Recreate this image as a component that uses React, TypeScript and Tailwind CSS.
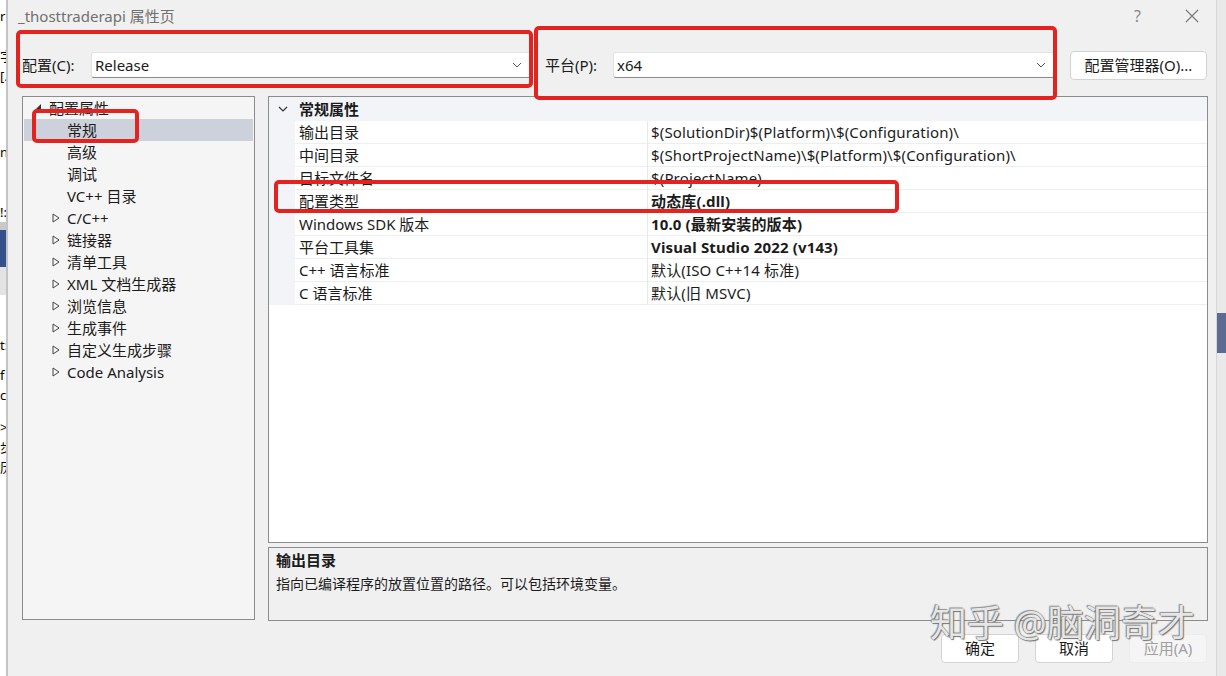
import React from 'react';

const ROWS: [string, string, boolean][] = [
  ['输出目录', '$(SolutionDir)$(Platform)\\$(Configuration)\\', false],
  ['中间目录', '$(ShortProjectName)\\$(Platform)\\$(Configuration)\\', false],
  ['目标文件名', '$(ProjectName)', false],
  ['配置类型', '动态库(.dll)', true],
  ['Windows SDK 版本', '10.0 (最新安装的版本)', true],
  ['平台工具集', 'Visual Studio 2022 (v143)', true],
  ['C++ 语言标准', '默认(ISO C++14 标准)', false],
  ['C 语言标准', '默认(旧 MSVC)', false],
];

const LEAVES = ['常规', '高级', '调试', 'VC++ 目录'];
const GROUPS = ['C/C++', '链接器', '清单工具', 'XML 文档生成器', '浏览信息', '生成事件', '自定义生成步骤', 'Code Analysis'];

function Chevron() {
  return (
    <svg width="10" height="6" viewBox="0 0 10 6" className="shrink-0">
      <polyline points="1,1 5,5 9,1" fill="none" stroke="#555" strokeWidth="1" />
    </svg>
  );
}

function Combo({ value, width }: { value: string; width: string }) {
  return (
    <div className={`${width} h-[26px] bg-white border border-[#e2e2e2] border-b-[#8a8a8a] rounded-[3px] flex items-center pl-[3px] pr-[8px]`}>
      <span className="flex-1">{value}</span>
      <Chevron />
    </div>
  );
}

function Collapsed() {
  return (
    <svg width="8" height="10" viewBox="0 0 8 10" className="shrink-0">
      <polygon points="1,1 7,5 1,9" fill="none" stroke="#444" strokeWidth="1" />
    </svg>
  );
}

function RedBox({ cls }: { cls: string }) {
  return <div className={`absolute border-[4px] border-[#e3231f] rounded-[5px] pointer-events-none ${cls}`} />;
}

export default function App() {
  return (
    <div className="relative w-[1226px] h-[676px] flex overflow-hidden bg-[#f0f0f0] text-[15px] text-[#1b1b1b] font-['Noto_Sans','Noto_Sans_CJK_SC',sans-serif]">
      {/* background window on the left */}
      <div className="w-[8px] shrink-0 flex flex-col bg-white border-r-2 border-[#c4c4c4] overflow-hidden text-[13px] leading-[20px] text-black">
        <div className="h-[6px]" />
        <div>r:</div>
        <div className="h-[20px]" />
        <div>字</div>
        <div>[.]</div>
        <div className="h-[56px]" />
        <div>n:</div>
        <div className="h-[40px]" />
        <div>!:</div>
        <div className="h-[8px] bg-[#c9c9c9]" />
        <div className="h-[37px] bg-[#34518c]" />
        <div className="h-[28px] bg-[#e3e3e3]" />
        <div className="h-[40px]" />
        <div>t:</div>
        <div className="h-[10px]" />
        <div>f</div>
        <div>c</div>
        <div className="h-[12px]" />
        <div>&gt;</div>
        <div>步</div>
        <div>历</div>
      </div>

      {/* dialog */}
      <div className="w-[1209px] shrink-0 flex flex-col bg-[#f0f0f0] border-r border-[#d6d6d6]">
        {/* title bar */}
        <div className="h-[32px] flex items-center pl-[10px] pr-[17px] text-[#707070]">
          <span className="flex-1">_thosttraderapi 属性页</span>
          <span className="text-[16px] text-[#8a8a8a] mr-[44px]">?</span>
          <svg width="14" height="14" viewBox="0 0 14 14">
            <path d="M1 1 L13 13 M13 1 L1 13" stroke="#777" strokeWidth="1.1" />
          </svg>
        </div>

        {/* config row */}
        <div className="mt-[18px] h-[30px] flex items-center pl-[14px] pr-[9px]">
          <span className="w-[69px]">配置(C):</span>
          <Combo value="Release" width="w-[440px]" />
          <span className="ml-[14px] w-[68px]">平台(P):</span>
          <Combo value="x64" width="w-[442px]" />
          <div className="ml-[15px] w-[137px] h-[29px] bg-white border border-[#d3d3d3] rounded-[4px] flex items-center justify-center">
            配置管理器(O)...
          </div>
        </div>

        {/* panels */}
        <div className="mt-[16px] flex pl-[14px] pr-[8px] gap-[13px]">
          {/* tree */}
          <div className="w-[233px] h-[524px] bg-[#f5f5f5] border border-[#8c8c8c] px-[1px]">
            <div className="h-[22px] flex items-center">
              <svg width="8" height="8" viewBox="0 0 8 8" className="ml-[10px] mr-[7px]">
                <polygon points="7,0 7,7 0,7" fill="#333" />
              </svg>
              <span>配置属性</span>
            </div>
            {LEAVES.map((l, i) => (
              <div key={l} className={`h-[22px] flex items-center pl-[43px] ${i === 0 ? 'bg-[#cdd1db]' : ''}`}>
                {l}
              </div>
            ))}
            {GROUPS.map(g => (
              <div key={g} className="h-[22px] flex items-center pl-[28px] gap-[7px]">
                <Collapsed />
                <span>{g}</span>
              </div>
            ))}
          </div>

          {/* property grid + description */}
          <div className="flex-1 flex flex-col gap-[4px]">
            <div className="h-[447px] bg-white border border-[#8c8c8c] flex flex-col">
              <div className="h-[24px] flex items-center bg-[#f2f4f8] font-bold">
                <svg width="10" height="6" viewBox="0 0 10 6" className="ml-[9px] mr-[11px]">
                  <polyline points="1,1 5,5 9,1" fill="none" stroke="#333" strokeWidth="1.2" />
                </svg>
                <span>常规属性</span>
              </div>
              {ROWS.map(([name, val, bold]) => (
                <div key={name} className="h-[23px] flex">
                  <div className="w-[26px] bg-[#f2f4f8]" />
                  <div className="w-[353px] flex items-center pl-[4px] border-b border-[#eceef2] border-r border-r-[#e6e8ec]">
                    {name}
                  </div>
                  <div className={`flex-1 flex items-center pl-[3px] tracking-[0.15px] border-b border-[#eceef2] ${bold ? 'font-bold' : ''}`}>
                    {val}
                  </div>
                </div>
              ))}
            </div>
            <div className="h-[74px] bg-[#f0f0f0] border border-[#8c8c8c] px-[7px] pt-[1px] leading-[23px]">
              <div className="font-bold">输出目录</div>
              <div className="text-[14px]">指向已编译程序的放置位置的路径。可以包括环境变量。</div>
            </div>
          </div>
        </div>

        {/* buttons */}
        <div className="mt-[13px] flex justify-end gap-[16px] pr-[9px]">
          <div className="w-[78px] h-[29px] bg-white border border-[#d3d3d3] rounded-[4px] flex items-center justify-center">确定</div>
          <div className="w-[78px] h-[29px] bg-white border border-[#d3d3d3] rounded-[4px] flex items-center justify-center">取消</div>
          <div className="w-[78px] h-[29px] bg-[#f5f5f5] border border-[#ececec] rounded-[4px] flex items-center justify-center text-[#a0a0a0]">应用(A)</div>
        </div>
      </div>

      {/* background window on the right */}
      <div className="flex-1 flex flex-col bg-[#e9e9e9]">
        <div className="h-[313px]" />
        <div className="h-[40px] bg-[#5b6b92]" />
      </div>

      {/* annotations */}
      <RedBox cls="left-[16px] top-[30px] w-[517px] h-[58px]" />
      <RedBox cls="left-[534px] top-[26px] w-[523px] h-[74px]" />
      <RedBox cls="left-[32px] top-[109px] w-[107px] h-[34px]" />
      <RedBox cls="left-[274px] top-[180px] w-[625px] h-[33px]" />

      {/* watermark */}
      <div className="absolute left-[930px] top-[598px] text-[37px] leading-[50px] text-[rgba(250,250,250,0.9)] [text-shadow:0_0_1px_#555,1px_1px_1px_#777,-1px_-1px_1px_#999] pointer-events-none">
        知乎 @脑洞奇才
      </div>
    </div>
  );
}
